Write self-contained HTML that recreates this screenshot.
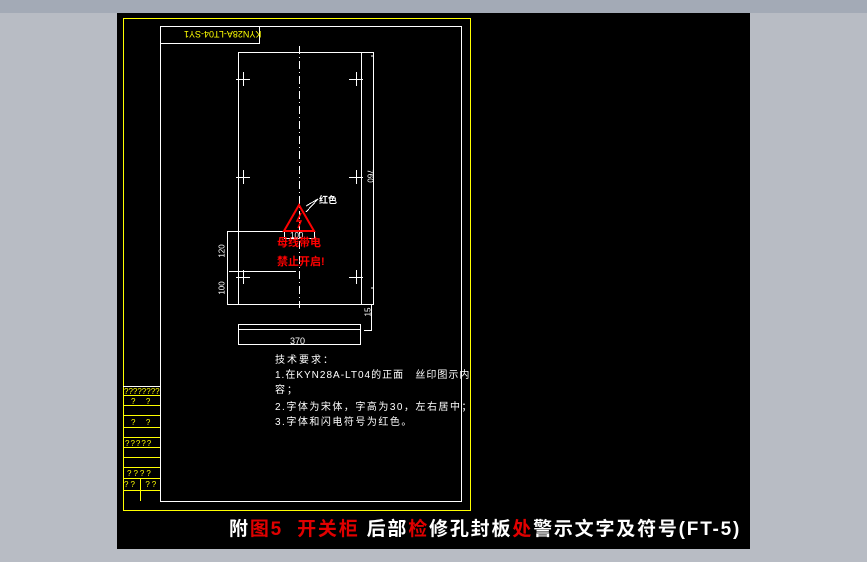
<!DOCTYPE html>
<html><head><meta charset="utf-8"><style>
html,body{margin:0;padding:0;}
body{width:867px;height:562px;background:#b8bcc4;position:relative;overflow:hidden;font-family:"Liberation Sans","Noto Sans CJK SC",sans-serif;}
#top{position:absolute;left:0;top:0;width:867px;height:13px;background:#a3aab6;}
#panel{position:absolute;left:117px;top:13px;width:633px;height:536px;background:#000;}
svg{position:absolute;left:0;top:0;}
.t{position:absolute;color:#fff;font-size:10px;white-space:nowrap;letter-spacing:2px;line-height:12px;}
.title{position:absolute;left:229px;top:518px;font-size:19px;line-height:24px;color:#fff;white-space:nowrap;letter-spacing:1.8px;font-weight:bold;}
.r{color:#e00000;}
</style></head><body>
<div id="top"></div>
<div id="panel"></div>
<svg width="867" height="562" viewBox="0 0 867 562" fill="none" shape-rendering="crispEdges">
<rect x="123.5" y="18.5" width="347" height="492" stroke="#ffff00"/>
<rect x="160.5" y="26.5" width="301" height="475" stroke="#fff"/>
<rect x="160.5" y="26.5" width="99" height="17" stroke="#fff"/>
<g stroke="#ffff00">
<line x1="123" y1="395.5" x2="160" y2="395.5"/><line x1="123" y1="405.5" x2="160" y2="405.5"/>
<line x1="123" y1="415.5" x2="160" y2="415.5"/><line x1="123" y1="427.5" x2="160" y2="427.5"/>
<line x1="123" y1="437.5" x2="160" y2="437.5"/><line x1="123" y1="447.5" x2="160" y2="447.5"/>
<line x1="123" y1="457.5" x2="160" y2="457.5"/><line x1="123" y1="467.5" x2="160" y2="467.5"/>
<line x1="123" y1="478.5" x2="160" y2="478.5"/><line x1="123" y1="490.5" x2="160" y2="490.5"/>
<line x1="140.5" y1="478" x2="140.5" y2="501"/>
</g>
<line x1="123" y1="386.5" x2="160" y2="386.5" stroke="#fff"/>
<g stroke="#fff">
<rect x="238.5" y="52.5" width="135" height="252"/>
<line x1="361.5" y1="52" x2="361.5" y2="304"/>
<line x1="299.5" y1="46" x2="299.5" y2="308" stroke-dasharray="8,3,1,3"/>
<path d="M236 79.5h14M243.5 72v14M349 79.5h14M356.5 72v14M236 177.5h14M243.5 170v14M349 177.5h14M356.5 170v14M236 277.5h14M243.5 270v14M349 277.5h14M356.5 270v14"/>
<path d="M227.5 231v73M227 231.5h72M229 271.5h67M227 304.5h12"/>
<path d="M373.5 56v232M371 56h3M371 288h3"/>
<path d="M371.5 304v26M364 330.5h8"/>
<rect x="238.5" y="324.5" width="122" height="5"/>
<path d="M238.5 329v16M360.5 329v16M238 344.5h123"/>
<rect x="284.5" y="231.5" width="30" height="7"/>
<path d="M318 199L306 206M318 199L306 212"/>
</g>
<path d="M299 205L284 231L314 231Z" stroke="#f00" stroke-width="2" shape-rendering="auto"/>
<path d="M301 213l-4 8h4l-3 7" stroke="#f00" stroke-width="1.5" shape-rendering="auto"/>
</svg>
<div class="t" style="left:184px;top:28px;color:#ffff00;font-size:9px;letter-spacing:0;transform:rotate(180deg);">KYN28A-LT04-SY1</div>
<div class="t" style="left:319px;top:194px;font-size:9px;letter-spacing:0;font-weight:bold;">红色</div>
<div class="t" style="left:290px;top:230px;font-size:8px;letter-spacing:0;">100</div>
<div class="t" style="left:277px;top:237px;color:#f00;font-size:11px;letter-spacing:0;font-weight:bold;">母线带电</div>
<div class="t" style="left:277px;top:256px;color:#f00;font-size:11px;letter-spacing:0;font-weight:bold;">禁止开启!</div>
<div class="t" style="left:363px;top:170px;font-size:8px;letter-spacing:0;transform:rotate(90deg);">760</div>
<div class="t" style="left:216px;top:245px;font-size:8px;letter-spacing:0;transform:rotate(-90deg);">120</div>
<div class="t" style="left:216px;top:282px;font-size:8px;letter-spacing:0;transform:rotate(-90deg);">100</div>
<div class="t" style="left:364px;top:306px;font-size:8px;letter-spacing:0;transform:rotate(-90deg);">15</div>
<div class="t" style="left:290px;top:335px;font-size:9px;letter-spacing:0;">370</div>
<div class="t" style="left:275px;top:355px;">技术要求：</div>
<div class="t" style="left:275px;top:370px;letter-spacing:1px;">1.在KYN28A-LT04的正面 &nbsp; 丝印图示内</div>
<div class="t" style="left:275px;top:385px;">容；</div>
<div class="t" style="left:275px;top:402px;letter-spacing:1.5px;">2.字体为宋体，字高为30，左右居中；</div>
<div class="t" style="left:275px;top:417px;letter-spacing:1.5px;">3.字体和闪电符号为红色。</div>
<div class="t" style="left:124px;top:386px;color:#ff0;font-size:8px;letter-spacing:0;">????????</div>
<div class="t" style="left:131px;top:396px;color:#ff0;font-size:8px;">? &nbsp;?</div>
<div class="t" style="left:131px;top:417px;color:#ff0;font-size:8px;">? &nbsp;?</div>
<div class="t" style="left:125px;top:438px;color:#ff0;font-size:8px;letter-spacing:1px;">?????</div>
<div class="t" style="left:127px;top:468px;color:#ff0;font-size:8px;">????</div>
<div class="t" style="left:124px;top:479px;color:#ff0;font-size:8px;">?? &nbsp;??</div>
<div class="title">附<span class="r">图5 &nbsp;开关柜</span> 后部<span class="r">检</span>修孔封板<span class="r">处</span>警示文字及符号(FT-5)</div>
</body></html>
